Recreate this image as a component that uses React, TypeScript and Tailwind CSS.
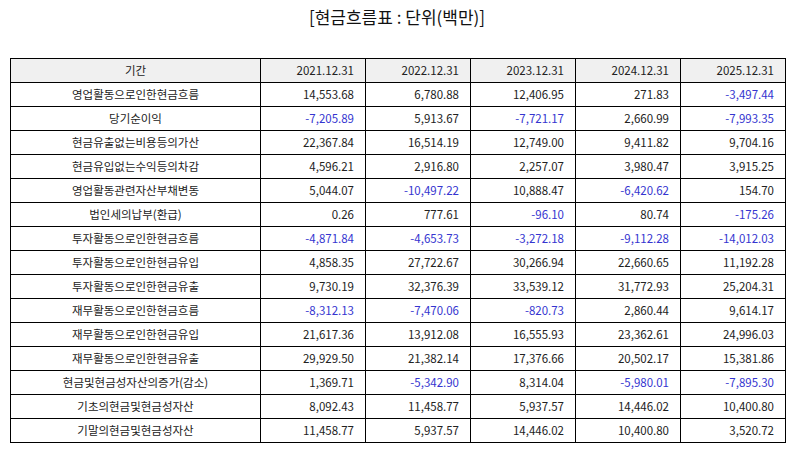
const years = ["2021.12.31", "2022.12.31", "2023.12.31", "2024.12.31", "2025.12.31"]

const rows: [string, string[]][] = [
  ["영업활동으로인한현금흐름", ["14,553.68", "6,780.88", "12,406.95", "271.83", "-3,497.44"]],
  ["당기순이익", ["-7,205.89", "5,913.67", "-7,721.17", "2,660.99", "-7,993.35"]],
  ["현금유출없는비용등의가산", ["22,367.84", "16,514.19", "12,749.00", "9,411.82", "9,704.16"]],
  ["현금유입없는수익등의차감", ["4,596.21", "2,916.80", "2,257.07", "3,980.47", "3,915.25"]],
  ["영업활동관련자산부채변동", ["5,044.07", "-10,497.22", "10,888.47", "-6,420.62", "154.70"]],
  ["법인세의납부(환급)", ["0.26", "777.61", "-96.10", "80.74", "-175.26"]],
  ["투자활동으로인한현금흐름", ["-4,871.84", "-4,653.73", "-3,272.18", "-9,112.28", "-14,012.03"]],
  ["투자활동으로인한현금유입", ["4,858.35", "27,722.67", "30,266.94", "22,660.65", "11,192.28"]],
  ["투자활동으로인한현금유출", ["9,730.19", "32,376.39", "33,539.12", "31,772.93", "25,204.31"]],
  ["재무활동으로인한현금흐름", ["-8,312.13", "-7,470.06", "-820.73", "2,860.44", "9,614.17"]],
  ["재무활동으로인한현금유입", ["21,617.36", "13,912.08", "16,555.93", "23,362.61", "24,996.03"]],
  ["재무활동으로인한현금유출", ["29,929.50", "21,382.14", "17,376.66", "20,502.17", "15,381.86"]],
  ["현금및현금성자산의증가(감소)", ["1,369.71", "-5,342.90", "8,314.04", "-5,980.01", "-7,895.30"]],
  ["기초의현금및현금성자산", ["8,092.43", "11,458.77", "5,937.57", "14,446.02", "10,400.80"]],
  ["기말의현금및현금성자산", ["11,458.77", "5,937.57", "14,446.02", "10,400.80", "3,520.72"]],
]

const font = { fontFamily: '"Noto Sans CJK KR", "Noto Sans", sans-serif' }

export default function App() {
  return (
    <div className="w-[794px] h-[452px] bg-white text-[#222]" style={font}>
      <h1 className="pt-[5px] h-[58px] text-center text-[17px] leading-[24px] text-[#111]">
        [현금흐름표 : 단위(백만)]
      </h1>
      <table className="ml-[10px] w-[775px] table-fixed border-collapse text-[11.5px]">
        <colgroup>
          <col className="w-[250px]" />
          {years.map((y) => (
            <col key={y} className="w-[105px]" />
          ))}
        </colgroup>
        <thead>
          <tr className="bg-[#f0f0f0]">
            <th className="h-[24px] border border-black p-0 font-normal text-center">기간</th>
            {years.map((y) => (
              <th key={y} className="h-[24px] border border-black p-0 pr-[11px] font-normal text-right">
                {y}
              </th>
            ))}
          </tr>
        </thead>
        <tbody>
          {rows.map(([label, vals]) => (
            <tr key={label}>
              <td className="h-[24px] border border-black p-0 text-center">{label}</td>
              {vals.map((v, i) => (
                <td
                  key={i}
                  className={`h-[24px] border border-black p-0 pr-[11px] text-right ${v.startsWith("-") ? "text-[#3535d0]" : ""}`}
                >
                  {v}
                </td>
              ))}
            </tr>
          ))}
        </tbody>
      </table>
    </div>
  )
}
